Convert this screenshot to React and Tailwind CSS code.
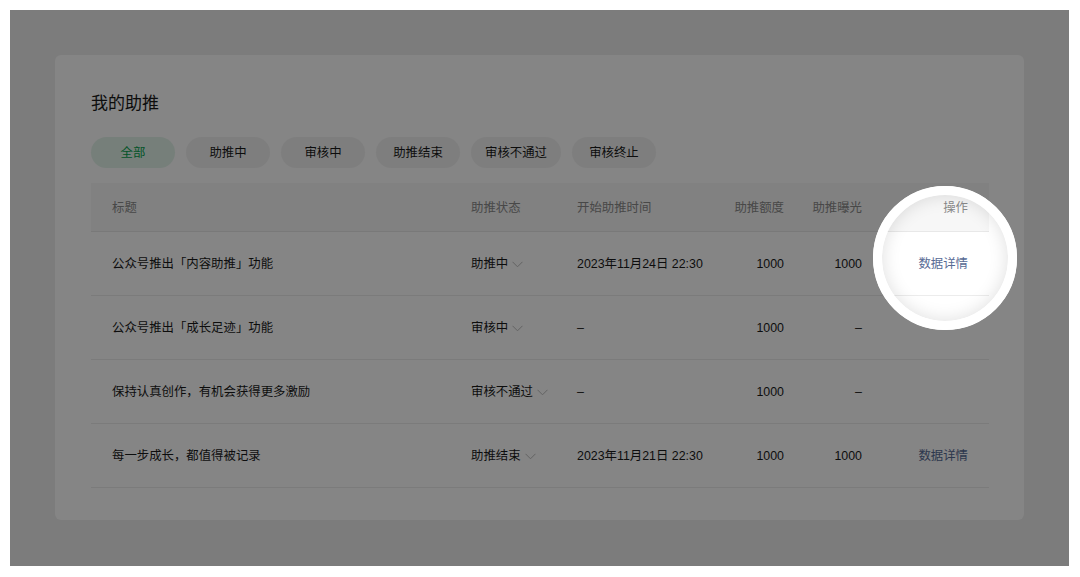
import React from "react";

const FONT = { fontFamily: '"Liberation Sans", "Noto Sans CJK SC", sans-serif' };

const tabs = ["全部", "助推中", "审核中", "助推结束", "审核不通过", "审核终止"];

const rows = [
  { title: "公众号推出「内容助推」功能", status: "助推中", time: "2023年11月24日 22:30", quota: "1000", exp: "1000", action: true },
  { title: "公众号推出「成长足迹」功能", status: "审核中", time: "–", quota: "1000", exp: "–", action: false },
  { title: "保持认真创作，有机会获得更多激励", status: "审核不通过", time: "–", quota: "1000", exp: "–", action: false },
  { title: "每一步成长，都值得被记录", status: "助推结束", time: "2023年11月21日 22:30", quota: "1000", exp: "1000", action: true },
];

function Chevron() {
  return (
    <svg width="11" height="7" viewBox="0 0 11 7" className="ml-[4px] shrink-0">
      <path d="M0.5 0.8 L5.5 5.8 L10.5 0.8" fill="none" stroke="#bdbdbd" strokeWidth="1" />
    </svg>
  );
}

const GRID = "grid grid-cols-[380px_106px_153px_54px_78px_127px] items-center";

export default function App() {
  return (
    <div className="min-h-[577px] bg-white pt-[10px] pl-[10px] pr-[11px] pb-[11px]" style={FONT}>
      <div className="relative h-[556px] overflow-hidden bg-[#ededed] p-[45px]">
        <div className="h-[465px] rounded-[6px] bg-white pl-[36px] pr-[35px] pt-[37px]">
          <div className="text-[17px] leading-[24px] text-[#191919]">我的助推</div>
          <div className="mt-[21px] flex gap-[11px]">
            {tabs.map((t, i) => (
              <div
                key={t}
                className={
                  i === 0
                    ? "flex h-[31px] min-w-[84px] items-center justify-center rounded-full bg-[#e3f4ea] px-[14px] pt-[1px] text-[12.4px] text-[#07a24f]"
                    : "flex h-[31px] min-w-[84px] items-center justify-center rounded-full bg-[#f2f2f2] px-[14px] pt-[1px] text-[12.4px] text-[#191919]"
                }
              >
                {t}
              </div>
            ))}
          </div>
          <div className="mt-[15px] w-[898px]">
            <div className={`${GRID} h-[49px] border-b border-[#e8e8e8] bg-[#f7f7f7] pt-[2px] text-[12.4px] text-[#8a8a8a]`}>
              <div className="pl-[21px]">标题</div>
              <div>助推状态</div>
              <div>开始助推时间</div>
              <div className="text-right">助推额度</div>
              <div className="text-right">助推曝光</div>
              <div className="pr-[21px] text-right">操作</div>
            </div>
            {rows.map((r) => (
              <div key={r.title} className={`${GRID} h-[64px] border-b border-[#ececec] pt-[2px] text-[12.4px] text-[#1a1a1a]`}>
                <div className="pl-[21px]">{r.title}</div>
                <div className="flex items-center">
                  <span>{r.status}</span>
                  <Chevron />
                </div>
                <div>{r.time}</div>
                <div className="text-right">{r.quota}</div>
                <div className="text-right">{r.exp}</div>
                <div className="pr-[21px] text-right text-[#576b95]">{r.action ? "数据详情" : ""}</div>
              </div>
            ))}
          </div>
        </div>
        <div className="absolute left-[863px] top-[176px] h-[144px] w-[144px] rounded-full border-[9px] border-white shadow-[0_0_0_9999px_rgba(0,0,0,0.48),inset_0_0_18px_rgba(0,0,0,0.13)]" />
      </div>
    </div>
  );
}
